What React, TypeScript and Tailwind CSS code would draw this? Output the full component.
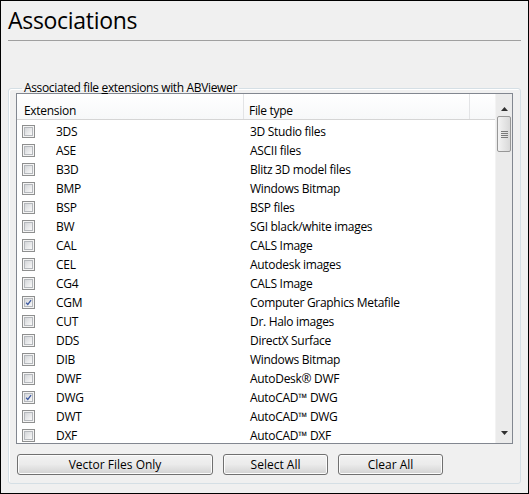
import React from 'react';

const ROWS: { ext: string; type: string; checked?: boolean }[] = [
  { ext: '3DS', type: '3D Studio files' },
  { ext: 'ASE', type: 'ASCII files' },
  { ext: 'B3D', type: 'Blitz 3D model files' },
  { ext: 'BMP', type: 'Windows Bitmap' },
  { ext: 'BSP', type: 'BSP files' },
  { ext: 'BW', type: 'SGI black/white images' },
  { ext: 'CAL', type: 'CALS Image' },
  { ext: 'CEL', type: 'Autodesk images' },
  { ext: 'CG4', type: 'CALS Image' },
  { ext: 'CGM', type: 'Computer Graphics Metafile', checked: true },
  { ext: 'CUT', type: 'Dr. Halo images' },
  { ext: 'DDS', type: 'DirectX Surface' },
  { ext: 'DIB', type: 'Windows Bitmap' },
  { ext: 'DWF', type: 'AutoDesk® DWF' },
  { ext: 'DWG', type: 'AutoCAD™ DWG', checked: true },
  { ext: 'DWT', type: 'AutoCAD™ DWG' },
  { ext: 'DXF', type: 'AutoCAD™ DXF' },
];

function CheckBox({ checked }: { checked?: boolean }) {
  return (
    <div className="w-[13px] h-[13px] border border-[#8e8f8f] bg-[#f4f4f4] p-[1px] shrink-0">
      <div className="relative w-full h-full border border-[#b5b8bc] bg-gradient-to-br from-[#d4d6d9] to-[#f9f9f9]">
        {checked && (
          <svg viewBox="0 0 9 9" className="absolute inset-0 w-full h-full">
            <path d="M1.5 4.8 L3.6 7 L7.8 1.4" fill="none" stroke="#3c58a0" strokeWidth="1.6" />
          </svg>
        )}
      </div>
    </div>
  );
}

function Button({ label, width }: { label: string; width: string }) {
  return (
    <button
      className={`${width} h-[21px] rounded-[3px] border border-[#707070] bg-gradient-to-b from-[#f2f2f2] via-[#ebebeb] to-[#d2d2d2] text-[12px] leading-[19px] text-black shadow-[inset_0_0_0_1px_#fcfcfc]`}
    >
      {label}
    </button>
  );
}

function ScrollBar() {
  return (
    <div className="w-[17px] shrink-0 flex flex-col bg-[#ebebeb] border-l border-[#f3f3f3]">
      <div className="h-[22px] flex items-end justify-center pb-[5px]">
        <svg width="7" height="4" viewBox="0 0 7 4">
          <path d="M3.5 0 L7 4 L0 4 Z" fill="#303030" />
        </svg>
      </div>
      <div className="mx-[1px] h-[36px] rounded-[2px] border border-[#979797] bg-gradient-to-r from-[#f3f3f3] to-[#d9d9d9] flex flex-col items-center justify-center gap-[1px]">
        <div className="w-[7px] h-[1px] bg-[#7a7a7a]" />
        <div className="w-[7px] h-[1px] bg-[#7a7a7a]" />
        <div className="w-[7px] h-[1px] bg-[#7a7a7a]" />
        <div className="w-[7px] h-[1px] bg-[#7a7a7a]" />
      </div>
      <div className="flex-1" />
      <div className="h-[17px] flex items-start justify-center pt-[5px]">
        <svg width="7" height="4" viewBox="0 0 7 4">
          <path d="M0 0 L7 0 L3.5 4 Z" fill="#303030" />
        </svg>
      </div>
    </div>
  );
}

export default function App() {
  return (
    <div
      className="w-[529px] h-[494px] border border-black bg-[#f0f0f0] text-black flex flex-col"
      style={{ fontFamily: '"Open Sans", "Noto Sans", sans-serif' }}
    >
      <div className="mx-[7px] h-[40px] border-b border-[#a0a0a0] pt-[5px]">
        <h1 className="text-[23px] leading-[28px] tracking-[-0.3px]">Associations</h1>
      </div>

      <fieldset className="mx-[7px] mt-[42px] border border-[#d5dfe5] rounded-[3px] px-[7px] pb-[8px] shadow-[inset_1px_1px_0_#ffffff]">
        <legend className="ml-[6px] px-[2px] text-[12px] leading-[10px] tracking-[-0.35px]">
          Associated file <span className="underline">e</span>xtensions with ABViewer
        </legend>

        <div className="h-[351px] border border-[#828790] bg-white flex overflow-hidden">
          <div className="flex-1 flex flex-col min-w-0">
            <div className="h-[26px] shrink-0 flex border-b border-[#d5d5d5] bg-gradient-to-b from-white to-[#f7f8f9] text-[12px] tracking-[-0.3px]">
              <div className="w-[227px] border-r border-[#e3e4e6] pl-[7px] pt-[8px]">Extension</div>
              <div className="w-[226px] border-r border-[#e3e4e6] pl-[5px] pt-[8px]">File type</div>
              <div className="flex-1" />
            </div>
            <div className="pt-[2px] text-[12px] tracking-[-0.3px]">
              {ROWS.map((r) => (
                <div key={r.ext} className="h-[19px] flex items-center">
                  <div className="w-[233px] flex items-center pl-[5px]">
                    <CheckBox checked={r.checked} />
                    <span className="ml-[21px]">{r.ext}</span>
                  </div>
                  <span>{r.type}</span>
                </div>
              ))}
            </div>
          </div>
          <ScrollBar />
        </div>

        <div className="mt-[10px] ml-[1px] flex gap-[10px]">
          <Button label="Vector Files Only" width="w-[196px]" />
          <Button label="Select All" width="w-[105px]" />
          <Button label="Clear All" width="w-[105px]" />
        </div>
      </fieldset>
    </div>
  );
}
